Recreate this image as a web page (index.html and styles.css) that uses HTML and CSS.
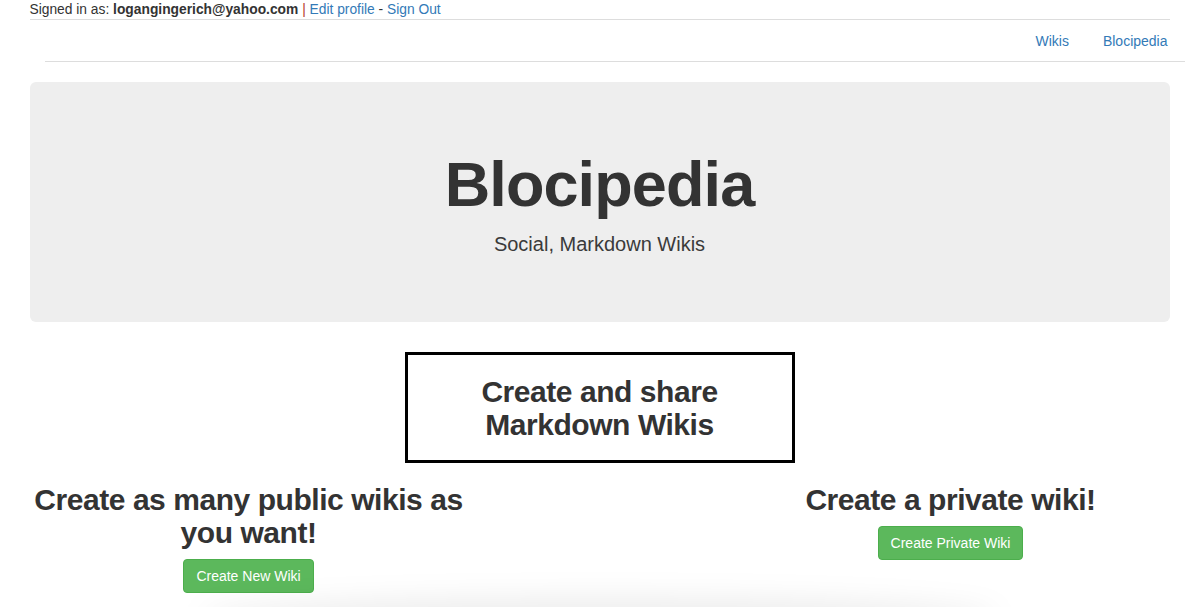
FILE: index.html
```html
<!DOCTYPE html>
<html lang="en">
<head>
<meta charset="utf-8">
<title>Blocipedia</title>
<link rel="stylesheet" href="styles.css">
</head>
<body>
<div class="container">
  <div class="user-bar">
    Signed in as: <strong>logangingerich@yahoo.com</strong> <span class="sep">|</span> <a href="#">Edit profile</a> - <a href="#">Sign Out</a>
  </div>
  <ul class="nav">
    <li><a href="#">Wikis</a></li>
    <li><a href="#">Blocipedia</a></li>
  </ul>
  <div class="jumbotron">
    <h1>Blocipedia</h1>
    <p>Social, Markdown Wikis</p>
  </div>
  <div class="feature-box">
    <h2>Create and share<br>Markdown Wikis</h2>
  </div>
  <div class="cols">
    <div class="col">
      <h2>Create as many public wikis as you want!</h2>
      <a class="btn" href="#">Create New Wiki</a>
    </div>
    <div class="col">
      <h2>Create a private wiki!</h2>
      <a class="btn" href="#">Create Private Wiki</a>
    </div>
  </div>
</div>
<div class="window-shadow"></div>
</body>
</html>
```
FILE: styles.css
```css
* { box-sizing: border-box; }
html, body { margin: 0; padding: 0; background: #fff; }
body {
  font-family: "Liberation Sans", Arial, Helvetica, sans-serif;
  font-size: 14px;
  line-height: 1.42857;
  color: #333;
  overflow: hidden;
}
a { color: #337ab7; text-decoration: none; }

.container {
  width: 1170px;
  margin: 0 auto;
  padding: 0 15px;
}

.user-bar {
  font-size: 13.8px;
  line-height: 19px;
  height: 20px;
  border-bottom: 1px solid #ddd;
  white-space: nowrap;
}
.user-bar strong { font-weight: 700; }
.user-bar .sep { color: #b5362b; }

.nav {
  list-style: none;
  margin: 0 -15px 20px 15px;
  padding: 0;
  display: flex;
  justify-content: flex-end;
  gap: 4px;
  border-bottom: 1px solid #ddd;
}
.nav li:last-child { margin-right: 2px; }
.nav a {
  display: block;
  padding: 11px 15px 10px;
  line-height: 20px;
}

.jumbotron {
  background: #eee;
  border-radius: 6px;
  padding: 48px 60px;
  margin-bottom: 30px;
  text-align: center;
}
.jumbotron h1 {
  margin: 20px 0 10px;
  font-size: 63px;
  line-height: 1.1;
  font-weight: 700;
  letter-spacing: -0.9px;
  color: #333;
}
.jumbotron p {
  margin: 0 0 15px;
  font-size: 20px;
  line-height: 30px;
  font-weight: 400;
  color: #3a3a3a;
}

h2 {
  font-size: 30px;
  line-height: 1.1;
  font-weight: 700;
  letter-spacing: -0.45px;
  color: #333;
}

.feature-box {
  width: 390px;
  margin: 0 auto;
  border: 3px solid #000;
  text-align: center;
}
.feature-box h2 { margin: 20px 0 19px; }

.cols {
  display: grid;
  grid-template-columns: 438px 438px;
  justify-content: space-between;
  text-align: center;
}
.col h2 { margin: 20px 0 10px; }

.btn {
  display: inline-block;
  padding: 6px 12px;
  font-size: 14px;
  line-height: 20px;
  color: #fff;
  background: #5cb85c;
  border: 1px solid #4cae4c;
  border-radius: 4px;
}

.window-shadow {
  position: fixed;
  left: 200px;
  right: 200px;
  bottom: -30px;
  height: 40px;
  border-radius: 50%;
  background: rgba(0,0,0,0.07);
  filter: blur(14px);
  pointer-events: none;
}
```
